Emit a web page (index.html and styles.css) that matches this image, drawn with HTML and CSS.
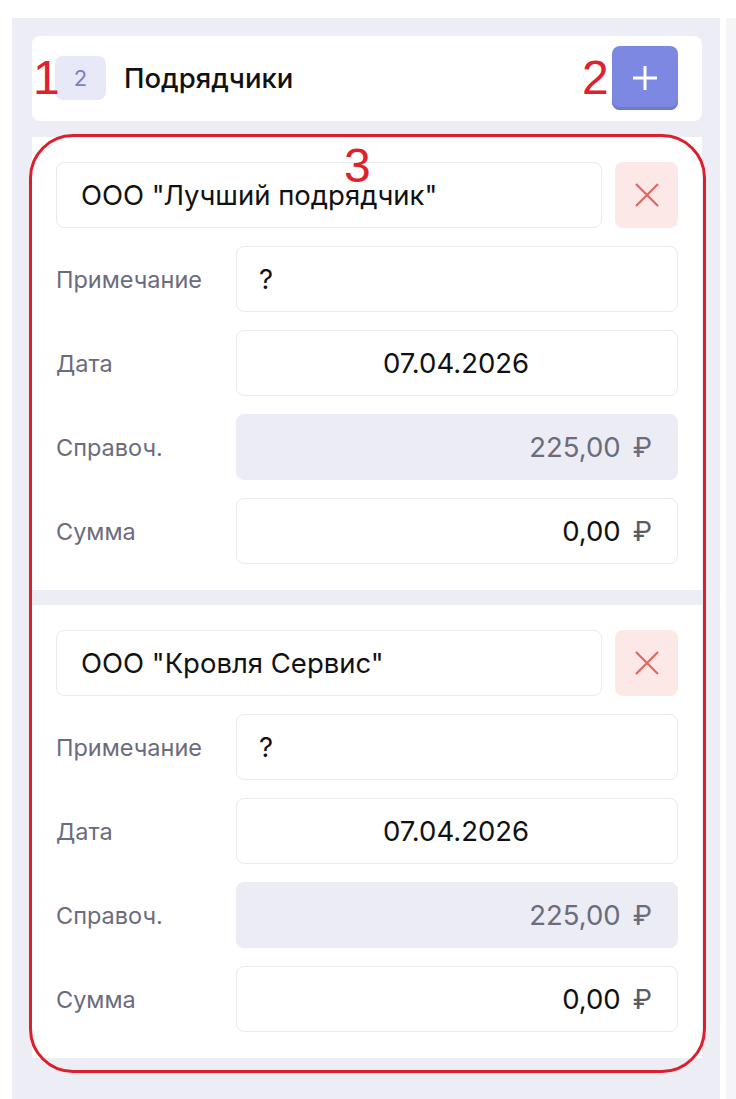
FILE: index.html
```html
<!DOCTYPE html>
<html lang="ru">
<head>
<meta charset="utf-8">
<link rel="stylesheet" href="styles.css">
</head>
<body>
<div class="page">
  <div class="panel">
    <div class="header">
      <span class="badge">2</span>
      <span class="title">Подрядчики</span>
      <button class="add-btn" type="button">
        <svg width="26" height="26" viewBox="0 0 26 26"><path d="M13 1v24M1 13h24" stroke="#fff" stroke-width="3" fill="none"/></svg>
      </button>
    </div>

    <div class="list">
      <div class="card">
        <div class="name-row">
          <div class="field name">ООО "Лучший подрядчик"</div>
          <button class="del-btn" type="button">
            <svg width="26" height="26" viewBox="0 0 26 26"><path d="M2 2l22 22M24 2L2 24" stroke="#e0675f" stroke-width="2.2" fill="none"/></svg>
          </button>
        </div>
        <div class="row"><span class="label">Примечание</span><div class="field">?</div></div>
        <div class="row"><span class="label">Дата</span><div class="field center">07.04.2026</div></div>
        <div class="row"><span class="label">Справоч.</span><div class="field right muted">225,00 <span class="rub">₽</span></div></div>
        <div class="row"><span class="label">Сумма</span><div class="field right">0,00 <span class="rub">₽</span></div></div>
      </div>

      <div class="card">
        <div class="name-row">
          <div class="field name">ООО "Кровля Сервис"</div>
          <button class="del-btn" type="button">
            <svg width="26" height="26" viewBox="0 0 26 26"><path d="M2 2l22 22M24 2L2 24" stroke="#e0675f" stroke-width="2.2" fill="none"/></svg>
          </button>
        </div>
        <div class="row"><span class="label">Примечание</span><div class="field">?</div></div>
        <div class="row"><span class="label">Дата</span><div class="field center">07.04.2026</div></div>
        <div class="row"><span class="label">Справоч.</span><div class="field right muted">225,00 <span class="rub">₽</span></div></div>
        <div class="row"><span class="label">Сумма</span><div class="field right">0,00 <span class="rub">₽</span></div></div>
      </div>
    </div>
  </div>
  <div class="side-strip"></div>

  <div class="mark mark-1">1</div>
  <div class="mark mark-2">2</div>
  <div class="mark mark-3">3</div>
  <div class="mark-frame"></div>
</div>
</body>
</html>
```

FILE: styles.css
```css
* { box-sizing: border-box; }
html, body { margin: 0; padding: 0; background: #fff; }
body { font-family: Inter, "Noto Sans", sans-serif; color: #111; }

.page {
  position: relative;
  width: 736px;
  height: 1099px;
  overflow: hidden;
  display: flex;
  align-items: flex-start;
}

.panel {
  margin: 18px 0 0 12px;
  width: 708px;
  min-height: 1081px;
  background: #ededf5;
  padding: 18px 18px 0 20px;
  display: flex;
  flex-direction: column;
  gap: 16px;
}

.side-strip {
  margin: 18px 0 0 6px;
  width: 10px;
  height: 1081px;
  background: #f5f5f7;
}

.header {
  background: #fff;
  border-radius: 8px;
  height: 85px;
  padding: 10px 24px 11px 23px;
  display: flex;
  align-items: center;
}

.badge {
  width: 51px;
  height: 44px;
  border-radius: 8px;
  background: #e7e9f8;
  color: #7880c8;
  font-size: 22px;
  display: flex;
  align-items: center;
  justify-content: center;
}

.title {
  margin-left: 18px;
  font-size: 27.5px;
  font-weight: 500;
  color: #111;
  flex: 1;
}

.add-btn {
  width: 66px;
  height: 64px;
  border: none;
  border-radius: 8px;
  background: #7d88e2;
  box-shadow: inset 0 -3px 0 #7079d0;
  display: flex;
  align-items: center;
  justify-content: center;
  padding: 0;
}

.list {
  display: flex;
  flex-direction: column;
  gap: 15px;
}

.card {
  background: #fff;
  padding: 25px 24px 26px 24px;
  display: flex;
  flex-direction: column;
  gap: 18px;
}

.name-row {
  display: flex;
  gap: 13px;
  height: 66px;
}

.field {
  height: 66px;
  border: 1px solid #ebebef;
  border-radius: 8px;
  background: #fff;
  font-size: 27.5px;
  color: #111;
  display: flex;
  align-items: center;
  padding: 0 24px 0 22px;
  flex: 1;
}

.field.name { padding-left: 24px; }
.field.center { justify-content: center; }
.field.right { justify-content: flex-end; padding-right: 25px; }
.field.muted { background: #ececf4; border-color: #ececf4; color: #6b6b7c; }
.rub { margin-left: 12px; color: #5a5a66; }
.field.muted .rub { color: #6b6b7c; }

.del-btn {
  width: 63px;
  height: 66px;
  border: none;
  border-radius: 8px;
  background: #fde8e8;
  display: flex;
  align-items: center;
  justify-content: center;
  padding: 0;
}

.row {
  display: flex;
  align-items: center;
  height: 66px;
}

.label {
  width: 180px;
  font-size: 23.5px;
  color: #6b6b7e;
}

.mark {
  position: absolute;
  color: #e0202a;
  font-family: "Liberation Sans", Arial, sans-serif;
  font-size: 48px;
  line-height: 1;
}
.mark-1 { left: 33px; top: 54px; }
.mark-2 { left: 582px; top: 54px; }
.mark-3 { left: 344px; top: 142px; }

.mark-frame {
  position: absolute;
  left: 29px;
  top: 134px;
  width: 677px;
  height: 939px;
  border: 3px solid #dc1f2a;
  border-radius: 44px;
}
```
